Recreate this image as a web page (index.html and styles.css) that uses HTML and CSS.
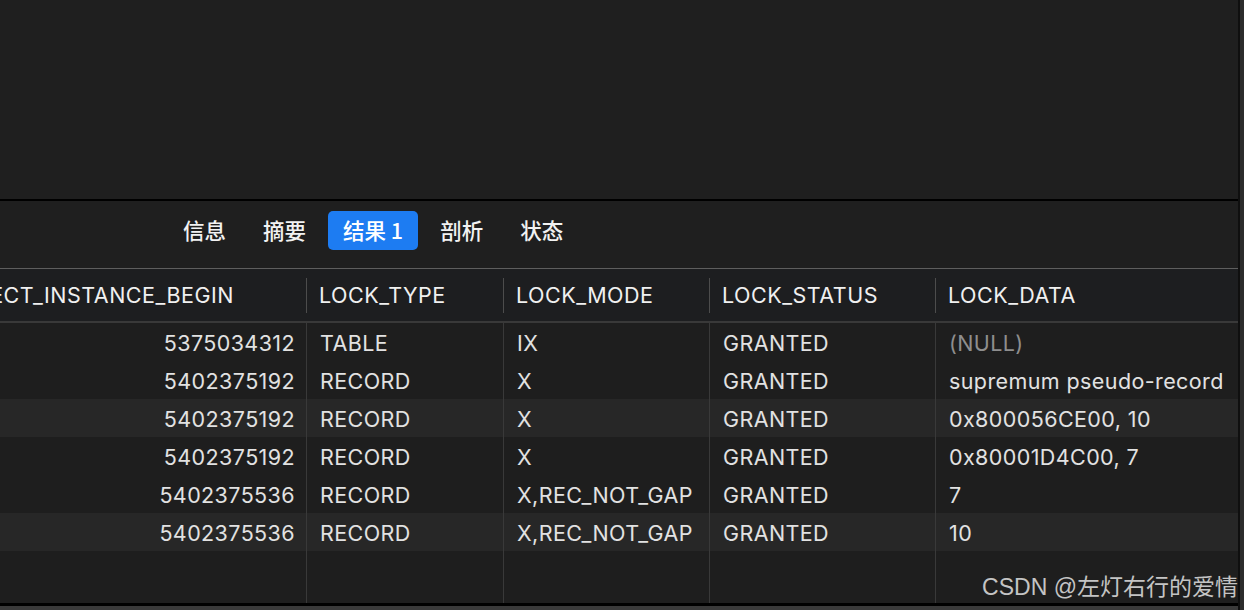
FILE: index.html
```html
<!DOCTYPE html>
<html>
<head>
<meta charset="utf-8">
<link rel="stylesheet" href="styles.css">
</head>
<body>
<div class="screen">
  <div class="main">
    <div class="top"></div>
    <div class="rule-black"></div>
    <div class="tabbar">
      <div class="tab">信息</div>
      <div class="tab">摘要</div>
      <div class="tab active">结果 1</div>
      <div class="tab">剖析</div>
      <div class="tab">状态</div>
    </div>
    <div class="rule-gray"></div>
    <div class="grid head">
      <div class="hcell first"><span>OBJECT_INSTANCE_BEGIN</span></div>
      <div class="hcell"><i class="sep"></i>LOCK_TYPE</div>
      <div class="hcell"><i class="sep"></i>LOCK_MODE</div>
      <div class="hcell"><i class="sep"></i>LOCK_STATUS</div>
      <div class="hcell"><i class="sep"></i>LOCK_DATA</div>
    </div>
    <div class="rule-head"></div>
    <div class="body">
      <div class="grid row">
        <div class="cell num">5375034312</div><div class="cell">TABLE</div><div class="cell">IX</div><div class="cell">GRANTED</div><div class="cell null">(NULL)</div>
      </div>
      <div class="grid row">
        <div class="cell num">5402375192</div><div class="cell">RECORD</div><div class="cell">X</div><div class="cell">GRANTED</div><div class="cell">supremum pseudo-record</div>
      </div>
      <div class="grid row stripe">
        <div class="cell num">5402375192</div><div class="cell">RECORD</div><div class="cell">X</div><div class="cell">GRANTED</div><div class="cell">0x800056CE00, 10</div>
      </div>
      <div class="grid row">
        <div class="cell num">5402375192</div><div class="cell">RECORD</div><div class="cell">X</div><div class="cell">GRANTED</div><div class="cell">0x80001D4C00, 7</div>
      </div>
      <div class="grid row">
        <div class="cell num">5402375536</div><div class="cell">RECORD</div><div class="cell">X,REC_NOT_GAP</div><div class="cell">GRANTED</div><div class="cell">7</div>
      </div>
      <div class="grid row stripe">
        <div class="cell num">5402375536</div><div class="cell">RECORD</div><div class="cell">X,REC_NOT_GAP</div><div class="cell">GRANTED</div><div class="cell">10</div>
      </div>
      <div class="grid filler">
        <div class="cell num"></div><div class="cell"></div><div class="cell"></div><div class="cell"></div><div class="cell"></div>
      </div>
      <div class="watermark">CSDN @左灯右行的爱情</div>
    </div>
    <div class="bottom-black"></div>
    <div class="bottom-gray"></div>
  </div>
  <div class="edge"></div>
</div>
</body>
</html>
```

FILE: styles.css
```css
html, body {
  margin: 0;
  padding: 0;
  background: #1f1f1f;
}
.screen {
  width: 1244px;
  height: 610px;
  display: flex;
  overflow: hidden;
  font-family: "Inter", "Liberation Sans", "Noto Sans CJK SC", sans-serif;
  color: #e2e2e2;
}
.main {
  width: 1238px;
  display: flex;
  flex-direction: column;
  border-right: 2px solid #0f0f0f;
}
.edge {
  flex: 1;
  background: #2c2c2c;
}
.top {
  height: 199px;
  background: #1f1f1f;
}
.rule-black {
  height: 2px;
  background: #000;
}
.tabbar {
  height: 67px;
  box-sizing: border-box;
  display: flex;
  align-items: flex-start;
  gap: 7px;
  padding-left: 168px;
  padding-top: 10px;
  background: #1f1f1f;
}
.tab {
  height: 39px;
  padding: 0 15px 2px;
  box-sizing: border-box;
  display: flex;
  align-items: center;
  border-radius: 5px;
  font-family: "Noto Sans CJK SC", "Inter", sans-serif;
  font-weight: 500;
  font-size: 21.5px;
  color: #f2f2f2;
}
.tab.active {
  background: #1d7cf2;
  color: #fff;
}
.rule-gray {
  height: 1px;
  background: #5e5e5e;
}
.grid {
  display: grid;
  grid-template-columns: 306px 197px 206px 226px 1fr;
}
.head {
  height: 52px;
  background: #1d1e20;
}
.hcell {
  display: flex;
  align-items: center;
  font-size: 21.5px;
  letter-spacing: 0.5px;
  color: #f0f0f0;
  white-space: nowrap;
}
.hcell.first {
  justify-content: flex-end;
  padding-right: 72px;
  overflow: hidden;
}
.sep {
  width: 1px;
  height: 35px;
  background: #4c4c4c;
  margin-right: 12px;
}
.rule-head {
  height: 2px;
  background: #393939;
}
.body {
  flex: 1;
  display: flex;
  flex-direction: column;
  position: relative;
  background: #1e1e1e;
}
.row {
  height: 38px;
}
.row.stripe {
  background: #272727;
}
.filler {
  flex: 1;
}
.cell {
  display: flex;
  align-items: center;
  padding-left: 13px;
  padding-top: 1px;
  box-sizing: border-box;
  font-size: 21.5px;
  letter-spacing: 0.4px;
  white-space: nowrap;
  border-left: 1px solid #393939;
}
.cell.num {
  justify-content: flex-end;
  padding-left: 0;
  padding-right: 11px;
  border-left: none;
}
.cell.null {
  color: #8e8e8e;
}
.watermark {
  position: absolute;
  right: 0;
  bottom: 1px;
  font-family: "Liberation Sans", "Noto Sans CJK SC", sans-serif;
  font-size: 23px;
  color: #c4c4c4;
}
.bottom-black {
  height: 3px;
  background: #000;
}
.bottom-gray {
  height: 4px;
  background: #3a3a3a;
}
```
